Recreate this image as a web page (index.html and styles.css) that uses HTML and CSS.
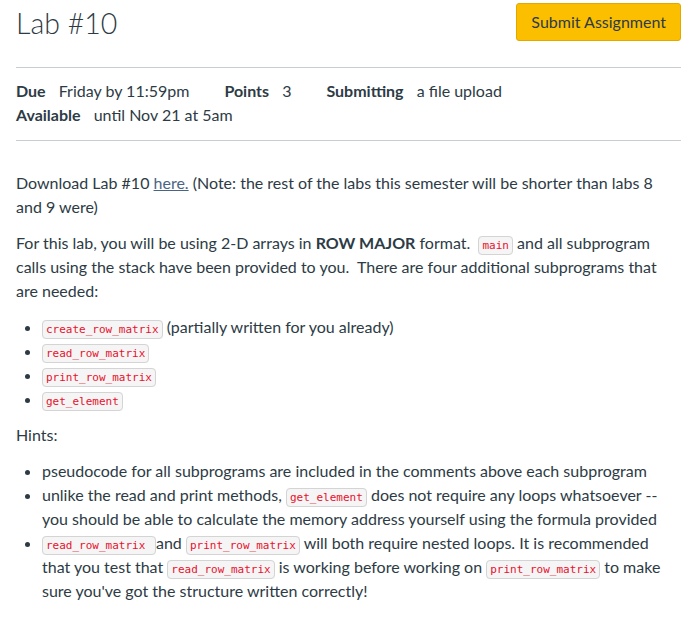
FILE: index.html
```html
<!DOCTYPE html>
<html lang="en">
<head>
    <meta charset="UTF-8">
    <meta name="viewport" content="width=device-width, initial-scale=1.0">
    <title>Lab #10</title>
    <link rel="stylesheet" href="styles.css">
</head>
<body>
    <div class="assignment">
        <!-- Baslik ve gonder butonu -->
        <div class="title-bar">
            <h1 class="title">Lab #10</h1>
            <button class="submit-btn">Submit Assignment</button>
        </div>

        <!-- Teslim bilgileri -->
        <div class="details">
            <div class="details-row">
                <span class="detail"><b>Due</b> Friday by 11:59pm</span>
                <span class="detail"><b>Points</b> 3</span>
                <span class="detail"><b>Submitting</b> a file upload</span>
            </div>
            <div class="details-row">
                <span class="detail"><b>Available</b> until Nov 21 at 5am</span>
            </div>
        </div>

        <!-- Aciklama -->
        <div class="description">
            <p>Download Lab #10 <a href="#">here.</a> (Note: the rest of the labs this semester will be shorter than labs 8 and 9 were)</p>
            <p>For this lab, you will be using 2-D arrays in <strong>ROW MAJOR</strong> format.&nbsp; <code>main</code> and all subprogram calls using the stack have been provided to you.&nbsp; There are four additional subprograms that are needed:</p>
            <ul>
                <li><code>create_row_matrix</code> (partially written for you already)</li>
                <li><code>read_row_matrix</code></li>
                <li><code>print_row_matrix</code></li>
                <li><code>get_element</code></li>
            </ul>
            <p>Hints:</p>
            <ul>
                <li>pseudocode for all subprograms are included in the comments above each subprogram</li>
                <li>unlike the read and print methods, <code>get_element</code> does not require any loops whatsoever -- you should be able to calculate the memory address yourself using the formula provided</li>
                <li><code>read_row_matrix&nbsp;</code>and <code>print_row_matrix</code> will both require nested loops. It is recommended that you test that <code>read_row_matrix</code> is working before working on <code>print_row_matrix</code> to make sure you've got the structure written correctly!</li>
            </ul>
        </div>
    </div>
</body>
</html>
```

FILE: styles.css
```css
/* Genel sayfa stili */
body {
    margin: 0;
    font-family: Lato, "Open Sans", sans-serif;
    font-size: 16px;
    line-height: 24px;
    color: #2d3b45;
    background-color: #fff;
}

.assignment {
    padding: 0 12px 0 16px;
}

/* Baslik satiri */
.title-bar {
    display: flex;
    justify-content: space-between;
    align-items: flex-start;
    padding-top: 3px;
    height: 64px;
    border-bottom: 1px solid #c7cdd1;
}

.title {
    margin: 2px 0 0;
    font-size: 28.5px;
    font-weight: 300;
    line-height: 36px;
}

.submit-btn {
    height: 38px;
    padding: 0 14px 2px;
    font-family: Lato, sans-serif;
    font-size: 16px;
    color: #2d3b45;
    background-color: #fcbf00;
    border: 1px solid #e0a800;
    border-radius: 3px;
    cursor: pointer;
}

/* Teslim bilgileri */
.details {
    padding: 11px 0 13px;
    border-bottom: 1px solid #c7cdd1;
}

.details-row {
    display: flex;
    gap: 35px;
}

.detail b {
    font-weight: 700;
    margin-right: 9px;
}

/* Aciklama metni */
.description {
    padding-top: 18px;
}

.description p {
    margin: 12px 0;
}

.description ul {
    margin: 12px 0;
    padding-left: 26px;
}

.description a {
    color: #4a6582;
}

code {
    font-family: "DejaVu Sans Mono", "Liberation Mono", monospace;
    font-size: 11px;
    line-height: 12px;
    color: #e8112d;
    background-color: #f5f5f5;
    border: 1px solid #d4d4d4;
    border-radius: 4px;
    padding: 2px 3px;
}
```
